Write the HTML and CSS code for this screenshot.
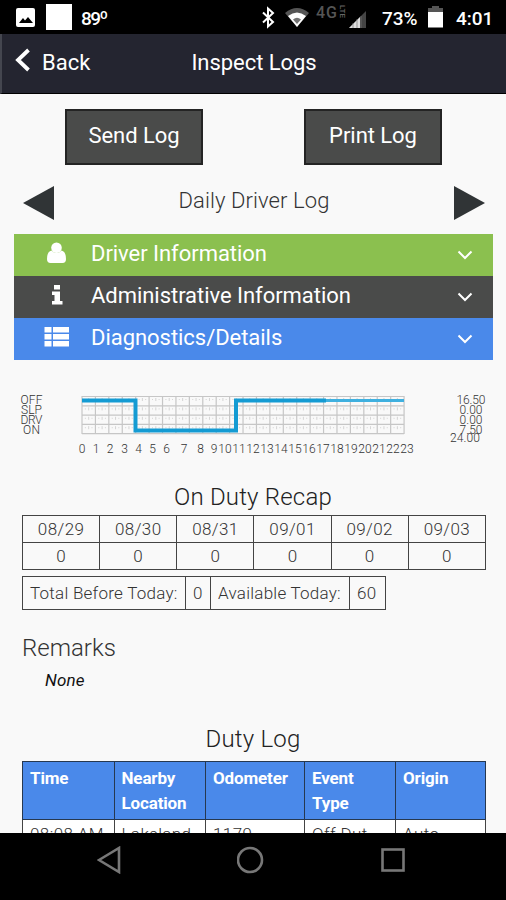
FILE: index.html
```html
<!DOCTYPE html>
<html lang="en">
<head>
    <meta charset="UTF-8">
    <meta name="viewport" content="width=device-width, initial-scale=1.0">
    <title>Inspect Logs</title>
    <link rel="stylesheet" href="styles.css">
</head>
<body>
    <div class="status-bar">
        <svg class="status-photo" width="19" height="19" viewBox="0 0 19 19">
            <rect width="19" height="19" rx="2" fill="#fff"/>
            <path d="M3 15l4-5 2 2.500 3-3.500 5 6z" fill="#000"/>
        </svg>
        <span class="status-square"></span>
        <span class="temperature">89º</span>
        <svg class="status-icons" width="115" height="34" viewBox="0 0 115 34">
            <path d="M2 12.500l10 9.500-5 4.500V8.500l5 4.500-10 9.500" fill="none" stroke="#fff" stroke-width="2"/>
            <path d="M24 13Q36 3 48 13L36 27z" fill="#555"/>
            <path d="M27 16Q36 9 45 16L36 27z" fill="#fff"/>
            <path d="M32 19.500Q36 16 40 19.500L36 24z" fill="#000" opacity=".55"/>
            <text class="network" x="55" y="18" textLength="21">4G</text>
            <text class="network-small" transform="translate(78.500 5) rotate(90)" textLength="13">LTE</text>
            <path d="M88 28L105 11V28z" fill="#444"/>
            <path d="M88 28L99 17V28z" fill="#ddd"/>
            <path d="M92 23v5M96 19v9M100 16v12" stroke="#777" stroke-width=".7"/>
        </svg>
        <span class="battery-text">73%</span>
        <svg class="battery" width="15" height="22" viewBox="0 0 15 22">
            <path d="M4 0h7v2h4v4H0V2h4z" fill="#555"/>
            <rect y="6" width="15" height="15.500" fill="#fff"/>
        </svg>
        <span class="clock">4:01</span>
    </div>

    <header class="header">
        <a class="back">
            <svg width="16" height="24" viewBox="0 0 16 24"><path d="M13.500 2L3 12l10.500 10" fill="none" stroke="#fff" stroke-width="3.800"/></svg>
            <span>Back</span>
        </a>
        <h1>Inspect Logs</h1>
    </header>

    <main class="content">
        <div class="buttons">
            <button class="button">Send Log</button>
            <button class="button">Print Log</button>
        </div>

        <div class="day-nav">
            <svg width="32" height="34" viewBox="0 0 32 34"><path d="M0 17L31 0v34z" fill="#303436"/></svg>
            <h2>Daily Driver Log</h2>
            <svg width="32" height="34" viewBox="0 0 32 34"><path d="M32 17L1 0v34z" fill="#303436"/></svg>
        </div>

        <div class="accordion">
            <div class="panel green">
                <svg class="panel-icon" width="26" height="22" viewBox="0 0 26 22">
                    <circle cx="12.500" cy="5.800" r="5.300" fill="#fff"/>
                    <path d="M7.500 8.500Q3 9.500 3 17Q3 21 6.500 21H18.500Q22 21 22 17Q22 9.500 17.500 8.500Q12.500 13.500 7.500 8.500z" fill="#fff"/>
                </svg>
                <span>Driver Information</span>
                <svg class="chevron" width="16" height="12" viewBox="0 0 16 12"><path d="M1.500 2.500L8 9l6.500-6.500"/></svg>
            </div>
            <div class="panel dark">
                <svg class="panel-icon" width="26" height="22" viewBox="0 0 26 22">
                    <path d="M10 1h6v4.500h-6zM8 7.500h8v9.500h2.500V20.500H8V17h2.500V11H8z" fill="#fff"/>
                </svg>
                <span>Administrative Information</span>
                <svg class="chevron" width="16" height="12" viewBox="0 0 16 12"><path d="M1.500 2.500L8 9l6.500-6.500"/></svg>
            </div>
            <div class="panel blue">
                <svg class="panel-icon" width="26" height="22" viewBox="0 0 26 22">
                    <path d="M.5 1h7v5.500h-7zM9 1h16v5.500H9zM.5 8h7v5.500h-7zM9 8h16v5.500H9zM.5 15h7v5.500h-7zM9 15h16v5.500H9z" fill="#fff"/>
                </svg>
                <span>Diagnostics/Details</span>
                <svg class="chevron" width="16" height="12" viewBox="0 0 16 12"><path d="M1.500 2.500L8 9l6.500-6.500"/></svg>
            </div>
        </div>

        <svg class="chart" width="506" height="80" viewBox="0 385 506 80">
            <g id="grid"></g>
            <path class="duty-line" d="M82 400.500H135.500V430.500H236V400.500H326"/>
            <path class="duty-line light" d="M326 400.500H404"/>
            <g class="chart-text">
                <text x="31.500" y="404" textLength="22">OFF</text>
                <text x="31.500" y="413.500" textLength="21">SLP</text>
                <text x="31.500" y="424" textLength="22">DRV</text>
                <text x="31.500" y="433.500" textLength="17">ON</text>
                <text x="471" y="404" textLength="29">16.50</text>
                <text x="471" y="413.500" textLength="23">0.00</text>
                <text x="471" y="424" textLength="23">0.00</text>
                <text x="471" y="434" textLength="23">7.50</text>
                <text x="465" y="442" textLength="30">24.00</text>
            </g>
            <g class="chart-text hours" id="hours"></g>
        </svg>

        <h2 class="recap-title">On Duty Recap</h2>
        <table class="recap">
            <tr><td>08/29</td><td>08/30</td><td>08/31</td><td>09/01</td><td>09/02</td><td>09/03</td></tr>
            <tr><td>0</td><td>0</td><td>0</td><td>0</td><td>0</td><td>0</td></tr>
        </table>
        <table class="totals">
            <colgroup><col class="w-before"><col class="w-zero"><col class="w-avail"><col class="w-sixty"></colgroup>
            <tr><td>Total Before Today:</td><td>0</td><td>Available Today:</td><td>60</td></tr>
        </table>

        <h2 class="remarks-title">Remarks</h2>
        <p class="remarks">None</p>

        <h2 class="duty-title">Duty Log</h2>
        <table class="duty">
            <colgroup><col class="w-time"><col class="w-loc"><col class="w-odo"><col class="w-event"><col class="w-origin"></colgroup>
            <tr><th>Time</th><th>Nearby Location</th><th>Odometer</th><th>Event Type</th><th>Origin</th></tr>
            <tr><td>08:08 AM</td><td>Lakeland</td><td>1179</td><td>Off Dut</td><td>Auto</td></tr>
        </table>
    </main>

    <nav class="nav-bar">
        <svg width="24" height="28" viewBox="0 0 24 28"><path d="M2 14L22 2v24z"/></svg>
        <svg width="28" height="28" viewBox="0 0 28 28"><circle cx="13" cy="14" r="12"/></svg>
        <svg width="24" height="28" viewBox="0 0 24 28"><rect x="1.500" y="3.500" width="21" height="21"/></svg>
    </nav>

    <script>
        // Draw the 24 hour grid, one column per hour and one row per status
        let grid = "";
        for (let i = 0; i <= 24; i++) {
            let x = 82 + i * 13.42;
            grid += `<path class="grid-line" d="M${x} 396V434"/>`;
            if (i < 24) {
                for (let r = 0; r < 4; r++) {
                    grid += `<path class="tick" d="M${x + 6.7} ${398 + r * 9.4}v3M${x + 3.4} ${399 + r * 9.4}v1M${x + 10} ${399 + r * 9.4}v1"/>`;
                }
            }
        }
        for (let r = 0; r <= 4; r++) {
            grid += `<path class="grid-line" d="M82 ${396.5 + r * 9.3}H404"/>`;
        }
        document.getElementById("grid").innerHTML = grid;

        let positions = [82, 96, 110, 124.5, 138.5, 152.5, 166.5, 184, 200.5, 214];
        let hours = "";
        for (let h = 0; h < 24; h++) {
            let x = h < 10 ? positions[h] : 225 + (h - 10) * 14;
            hours += `<text x="${x}" y="453">${h}</text>`;
        }
        document.getElementById("hours").innerHTML = hours;
    </script>
</body>
</html>
```
FILE: styles.css
```css
* {
    box-sizing: border-box;
}
body {
    margin: 0;
    height: 900px;
    overflow: hidden;
    display: flex;
    flex-direction: column;
    font-family: Roboto, sans-serif;
    background: #f9f9f9;
    color: #333;
}
h1, h2, p {
    margin: 0;
    font-weight: 400;
}
svg {
    display: block;
    flex: none;
}
.status-bar {
    height: 34px;
    flex: none;
    display: flex;
    align-items: center;
    padding: 0 11px 0 16px;
    background: #000;
    color: #fff;
    font-size: 19px;
    font-weight: 500;
}
.status-square {
    width: 26px;
    height: 26px;
    margin-left: 11px;
    background: #fff;
}
.temperature {
    margin-left: 9px;
    letter-spacing: -1.6px;
    padding-top: 3px;
}
.status-icons {
    margin-left: auto;
}
.network {
    font-size: 16px;
    fill: #555;
}
.network-small {
    font-size: 8px;
    fill: #666;
}
.battery-text {
    width: 38px;
    margin-left: 6px;
    padding-top: 2px;
}
.battery {
    margin-left: 8px;
}
.clock {
    width: 39px;
    margin-left: 13px;
    padding-top: 2px;
}
.header {
    height: 60px;
    flex: none;
    display: grid;
    grid-template-columns: 1fr auto 1fr;
    align-items: center;
    padding-bottom: 3px;
    background: #242530;
    border-left: 2px solid #44464f;
    border-bottom: 1px solid #000;
    color: #fff;
}
.back {
    display: flex;
    align-items: center;
    gap: 11px;
    padding-left: 13px;
    font-size: 22px;
}
.back svg {
    margin-top: -4px;
}
.header h1 {
    font-size: 22px;
    letter-spacing: -0.05px;
}
.content {
    height: 739px;
    flex: none;
    overflow: hidden;
}
.buttons {
    display: flex;
    justify-content: space-between;
    padding: 15px 64px 0 65px;
}
.button {
    width: 138px;
    height: 56px;
    padding: 0 0 3px;
    background: #4a4b4a;
    border: 2px solid #242424;
    color: #fff;
    font-family: inherit;
    font-size: 22px;
    letter-spacing: -0.05px;
}
.day-nav {
    display: flex;
    justify-content: space-between;
    align-items: center;
    height: 34px;
    margin: 21px 21px 0 23px;
}
.day-nav h2 {
    font-size: 22px;
    font-weight: 300;
    padding-bottom: 5px;
    letter-spacing: 0.1px;
}
.accordion {
    margin: 14px 13px 0 14px;
}
.panel {
    height: 42px;
    display: flex;
    align-items: center;
    padding: 0 20px 4px 30px;
    color: #fff;
    font-size: 22px;
    letter-spacing: -0.04px;
}
.panel span {
    margin-left: 21px;
}
.green {
    background: #8bc04f;
}
.dark {
    background: #4a4b4a;
}
.blue {
    background: #4a89ea;
}
.chevron {
    margin: 4px 0 0 auto;
    fill: none;
    stroke: #fff;
    stroke-width: 2;
}
.chart {
    margin-top: 25px;
}
.grid-line {
    stroke: #c6c6c6;
    stroke-width: 1.2;
}
.tick {
    stroke: #ccc;
    stroke-width: 0.8;
}
.duty-line {
    fill: none;
    stroke: #149bd3;
    stroke-width: 4;
}
.duty-line.light {
    stroke: #3fb0df;
    stroke-width: 3;
}
.chart-text {
    font-size: 12px;
    font-weight: 300;
    text-anchor: middle;
    fill: #333;
}
.recap-title, .duty-title {
    text-align: center;
    font-size: 24px;
    line-height: 28px;
    font-weight: 300;
    color: #222;
    letter-spacing: 0.2px;
}
.recap-title {
    margin-top: 18px;
}
table {
    margin-left: 22px;
    border-collapse: collapse;
    table-layout: fixed;
}
td, th {
    border: 1px solid #444;
    padding: 0;
}
.recap {
    width: 464px;
    margin-top: 4px;
    text-align: center;
    font-size: 17px;
    font-weight: 300;
    letter-spacing: 0.4px;
}
.recap td {
    height: 27px;
}
.totals {
    width: 364px;
    margin-top: 6px;
    font-size: 17px;
    font-weight: 300;
    letter-spacing: 0.25px;
}
.totals td {
    height: 33px;
    padding-left: 7px;
    white-space: nowrap;
}
.w-before {
    width: 163px;
}
.w-zero {
    width: 25px;
}
.w-avail {
    width: 139px;
}
.w-sixty {
    width: 36px;
}
.remarks-title {
    margin: 24px 0 0 22px;
    font-size: 24px;
    line-height: 28px;
    font-weight: 300;
}
.remarks {
    margin: 8px 0 0 45px;
    font-size: 17px;
    line-height: 20px;
    font-style: italic;
    letter-spacing: 0.2px;
    color: #111;
}
.duty-title {
    margin-top: 35px;
}
.duty {
    width: 464px;
    margin-top: 8px;
    background: #fff;
    font-size: 17px;
    line-height: 25px;
    font-weight: 300;
}
.duty th {
    height: 58px;
    padding: 4px 10px 3px 7px;
    background: #4a89ea;
    border-color: #263850;
    color: #fff;
    font-size: 17px;
    font-weight: 700;
    letter-spacing: -0.15px;
    text-align: left;
    vertical-align: top;
}
.duty td {
    padding: 2px 0 3px 7px;
    letter-spacing: 0.4px;
    white-space: nowrap;
}
.w-time, .w-loc {
    width: 91.5px;
}
.w-odo {
    width: 99px;
}
.w-event {
    width: 91px;
}
.nav-bar {
    flex: 1;
    display: flex;
    justify-content: space-between;
    padding: 13px 101px 0 97px;
    background: #000;
}
.nav-bar svg {
    fill: none;
    stroke: #777;
    stroke-width: 2.6;
}
```
